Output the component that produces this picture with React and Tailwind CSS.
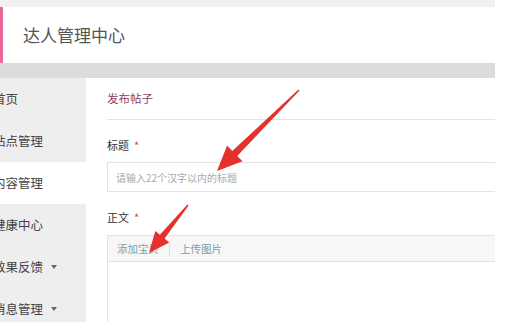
const font = { fontFamily: '"Noto Sans CJK SC", "Noto Sans", sans-serif' };

const arrowPoints = (x1, y1, x2, y2, headLen, headW, tailW, neckW) => {
    const dx = x2 - x1, dy = y2 - y1;
    const len = Math.hypot(dx, dy);
    const ux = dx / len, uy = dy / len;
    const nx = -uy, ny = ux;
    const bx = x2 - ux * headLen, by = y2 - uy * headLen;
    const p = (x, y, w) => [x + nx * w, y + ny * w];
    const pts = [
        p(x1, y1, tailW / 2),
        p(bx, by, neckW / 2),
        p(bx, by, headW / 2),
        [x2, y2],
        p(bx, by, -headW / 2),
        p(bx, by, -neckW / 2),
        p(x1, y1, -tailW / 2),
    ];
    return pts.map(([x, y]) => `${x.toFixed(1)},${y.toFixed(1)}`).join(" ");
};

const menu = [
    { label: "首页" },
    { label: "站点管理" },
    { label: "内容管理", active: true },
    { label: "健康中心" },
    { label: "效果反馈", caret: true },
    { label: "消息管理", caret: true },
];

const App = () => {
    return (
        <div className="relative w-[506px] h-[322px] bg-white overflow-hidden" style={font}>
            <div className="w-[495px]">
                <div className="h-[7px] bg-[#f1f1f1]"></div>
                <div className="h-[56px] bg-white border-l-[3px] border-[#e8689c] flex items-center pl-[20px]">
                    <span className="text-[17px] text-[#555]">达人管理中心</span>
                </div>
                <div className="h-[15px] bg-[#dcdcdc]"></div>

                <div className="flex">
                    <div className="w-[86px] shrink-0 bg-[#eeeeee]">
                        {menu.map((item) => (
                            <div
                                key={item.label}
                                className={`h-[42px] flex items-center gap-[8px] text-[12.5px] text-[#444] ${item.active ? "bg-white" : ""}`}
                            >
                                <span className="-ml-[7px] whitespace-nowrap">{item.label}</span>
                                {item.caret ? <span className="w-0 h-0 border-l-[3px] border-r-[3px] border-t-[4px] border-l-transparent border-r-transparent border-t-[#666]"></span> : ""}
                            </div>
                        ))}
                    </div>

                    <div className="flex-1 pl-[21px]">
                        <div className="h-[42px] flex items-center border-b border-[#e3e3e3]">
                            <span className="text-[11.5px] text-[#8e3d63]">发布帖子</span>
                        </div>

                        <div className="mt-[17px] h-[16px] flex items-center text-[11px] text-[#333]">
                            标题<span className="ml-[5px] text-[#d0406a] text-[11px]">*</span>
                        </div>
                        <div className="mt-[9px] h-[30px] border border-[#e2e2e2] border-r-0 flex items-center pl-[8px]">
                            <span className="text-[10px] text-[#aaa]">请输入22个汉字以内的标题</span>
                        </div>

                        <div className="mt-[17px] h-[16px] flex items-center text-[11px] text-[#333]">
                            正文<span className="ml-[5px] text-[#d0406a] text-[11px]">*</span>
                        </div>
                        <div className="mt-[10px] border border-[#e2e2e2] border-r-0">
                            <div className="h-[26px] bg-[#f7f7f7] border-b border-[#e2e2e2] flex items-center pl-[9px] text-[10.5px] text-[#7d9da8]">
                                <span>添加宝贝</span>
                                <span className="mx-[10px] h-[12px] border-l border-[#dcdcdc]"></span>
                                <span>上传图片</span>
                            </div>
                            <div className="h-[80px] bg-white"></div>
                        </div>
                    </div>
                </div>
            </div>

            <svg className="absolute inset-0 pointer-events-none" width="506" height="322">
                <polygon points={arrowPoints(299, 90, 217, 171, 25, 22, 1.5, 7)} fill="#e5302e" />
                <polygon points={arrowPoints(188, 205, 149, 253, 21, 18, 1.5, 6)} fill="#e5302e" />
            </svg>
        </div>
    );
};

export default App;
